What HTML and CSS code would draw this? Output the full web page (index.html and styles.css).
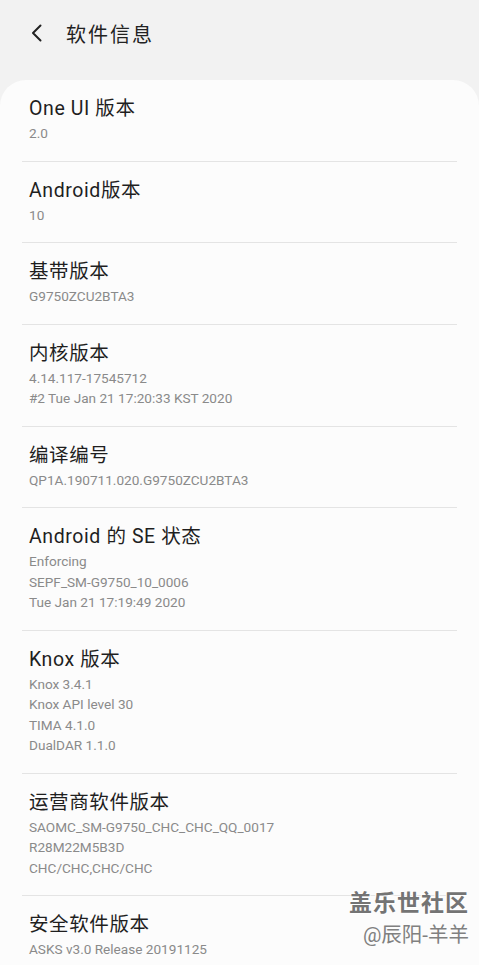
FILE: index.html
```html
<!DOCTYPE html>
<html lang="zh-CN">
<head>
  <meta charset="UTF-8" />
  <meta name="viewport" content="width=device-width, initial-scale=1.0" />
  <title>软件信息</title>
  <link rel="stylesheet" href="styles.css">
</head>
<body>
  <div class="header">
    <svg class="back" width="14" height="18" viewBox="0 0 14 18">
      <path d="M10.5 1.5 L3 9 L10.5 16.5" fill="none" stroke="#222" stroke-width="2" stroke-linecap="round" stroke-linejoin="round"/>
    </svg>
    <h1>软件信息</h1>
  </div>

  <div class="card">
    <div class="row">
      <div class="title">One UI 版本</div>
      <div class="sub">2.0</div>
    </div>
    <div class="row">
      <div class="title">Android版本</div>
      <div class="sub">10</div>
    </div>
    <div class="row">
      <div class="title">基带版本</div>
      <div class="sub">G9750ZCU2BTA3</div>
    </div>
    <div class="row">
      <div class="title">内核版本</div>
      <div class="sub">4.14.117-17545712</div>
      <div class="sub">#2 Tue Jan 21 17:20:33 KST 2020</div>
    </div>
    <div class="row">
      <div class="title">编译编号</div>
      <div class="sub">QP1A.190711.020.G9750ZCU2BTA3</div>
    </div>
    <div class="row">
      <div class="title">Android 的 SE 状态</div>
      <div class="sub">Enforcing</div>
      <div class="sub">SEPF_SM-G9750_10_0006</div>
      <div class="sub">Tue Jan 21 17:19:49 2020</div>
    </div>
    <div class="row">
      <div class="title">Knox 版本</div>
      <div class="sub">Knox 3.4.1</div>
      <div class="sub">Knox API level 30</div>
      <div class="sub">TIMA 4.1.0</div>
      <div class="sub">DualDAR 1.1.0</div>
    </div>
    <div class="row">
      <div class="title">运营商软件版本</div>
      <div class="sub">SAOMC_SM-G9750_CHC_CHC_QQ_0017</div>
      <div class="sub">R28M22M5B3D</div>
      <div class="sub">CHC/CHC,CHC/CHC</div>
    </div>
    <div class="row">
      <div class="title">安全软件版本</div>
      <div class="sub">ASKS v3.0 Release 20191125</div>
    </div>
  </div>

  <div class="watermark">
    <div class="wm-main">盖乐世社区</div>
    <div class="wm-user">@辰阳-羊羊</div>
  </div>
</body>
</html>
```

FILE: styles.css
```css
body {
  margin: 0;
  padding: 0;
  background: #f2f2f2;
  font-family: Roboto, 'Noto Sans CJK SC', sans-serif;
  color: #1f1f1f;
  height: 965px;
  overflow: hidden;
  position: relative;
}

.header {
  display: flex;
  align-items: center;
  height: 66px;
  padding-left: 30px;
  gap: 22px;
}

.back {
  display: block;
}

h1 {
  margin: 0;
  font-size: 20px;
  font-weight: normal;
  letter-spacing: 2px;
  color: #222;
}

.card {
  margin-top: 14px;
  background: #fcfcfc;
  border-radius: 26px 26px 0 0;
  padding: 0 22px;
}

.row {
  padding: 17px 7px 17px;
  border-bottom: 1px solid #e4e4e4;
}

.row:last-child {
  border-bottom: none;
}

.title {
  font-size: 19.5px;
  line-height: 24px;
  margin-bottom: 2px;
  letter-spacing: 0.6px;
}

.sub {
  font-size: 13.6px;
  line-height: 20.5px;
  color: #8a8a8a;
}

.watermark {
  position: absolute;
  right: 10px;
  top: 884px;
  text-align: right;
}

.wm-main {
  font-size: 23px;
  font-weight: bold;
  color: #747474;
  letter-spacing: 1px;
  text-shadow: 1px 1px 0 #fff, -1px -1px 0 #fff;
}

.wm-user {
  font-size: 20.5px;
  color: #808080;
}
```
